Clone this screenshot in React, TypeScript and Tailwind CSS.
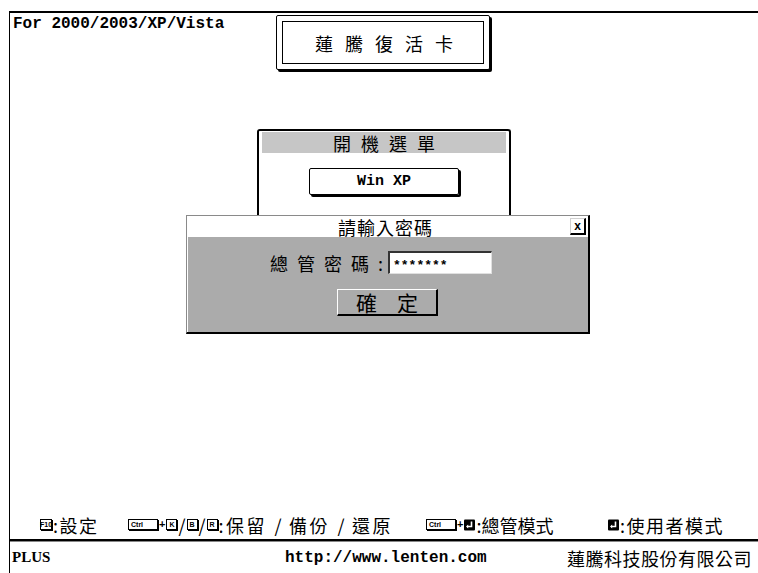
import React from "react";

function Key({ className, children }: { className: string; children?: React.ReactNode }) {
  return (
    <span
      className={
        "inline-flex items-center h-[11px] border border-black shadow-[1px_1px_0_#000] bg-white font-['Liberation_Sans',sans-serif] text-[7px] font-bold leading-none tracking-normal " +
        className
      }
    >
      {children}
    </span>
  );
}

function EnterIcon() {
  return (
    <svg width="11" height="12" viewBox="0 0 11 12" className="shrink-0">
      <rect x="0" y="0.5" width="11" height="11" rx="1" fill="#000" />
      <path d="M7.5 2.5 V7.5 H3" stroke="#fff" strokeWidth="1.6" fill="none" />
      <path d="M2 7.5 L4.2 5.6 V9.4 Z" fill="#fff" />
    </svg>
  );
}

export default function App() {
  return (
    <div className="w-[758px] h-[573px] overflow-hidden bg-white text-black font-['Noto_Sans_CJK_TC',sans-serif] pt-[11px] pl-[9px]">
      <div className="w-[760px] h-[562px] border-l border-t-2 border-black flex flex-col">
        {/* header */}
        <div className="flex h-[59px] shrink-0">
          <div className="w-[266px] pl-[3px] pt-[2px] font-['Liberation_Mono',monospace] font-bold text-[16px] leading-[18px]">
            For 2000/2003/XP/Vista
          </div>
          <div className="mt-[2px] w-[214px] h-[55px] border border-black shadow-[2px_2px_0_#000] p-[5px] rounded-[2px] bg-white">
            <div className="h-full border border-black flex items-center justify-center text-[18px] leading-none tracking-[12px] pl-[14px]">
              蓮騰復活卡
            </div>
          </div>
        </div>

        {/* boot menu */}
        <div className="ml-[247px] mt-[57px] w-[254px] h-[86px] shrink-0 border-2 border-b-0 border-black rounded-t-[3px] px-[3px] pt-[1px] flex flex-col items-center">
          <div className="w-full h-[21px] bg-[#c6c6c6] flex items-center justify-center text-[18px] leading-none tracking-[10px] pl-[10px]">
            開機選單
          </div>
          <div className="mt-[15px] w-[150px] h-[27px] border border-black shadow-[2px_2px_0_#000] rounded-[2px] flex items-center justify-center font-['Liberation_Mono',monospace] font-bold text-[15px] leading-none">
            Win XP
          </div>
        </div>

        {/* password dialog */}
        <div className="ml-[176px] w-[404px] h-[119px] shrink-0 border-t border-l border-[#8a8a8a] border-r-2 border-b-2 border-r-black border-b-black bg-[#ababab] shadow-[inset_1px_1px_0_#fff] flex flex-col">
          <div className="h-[21px] bg-white flex items-center">
            <div className="flex-1 text-center text-[18px] leading-none tracking-[1px] pl-[14px]">請輸入密碼</div>
            <div className="mr-[2px] w-[16px] h-[17px] border-t border-l border-[#d0d0d0] border-r-2 border-b-2 border-r-black border-b-black bg-white flex items-center justify-center font-['Liberation_Sans',sans-serif] font-bold text-[12px] leading-none">
              x
            </div>
          </div>
          <div className="flex items-center mt-[14px] pl-[83px]">
            <span className="text-[18px] leading-none tracking-[9px]">總管密碼</span>
            <span className="text-[18px] leading-none">:</span>
            <div className="ml-[5px] w-[104px] h-[23px] bg-white border-t-2 border-l-2 border-t-[#333] border-l-[#333] border-b border-r border-b-[#e0e0e0] border-r-[#e0e0e0] flex items-center pl-[3px] pt-[5px] font-['Liberation_Mono',monospace] font-bold text-[13px] leading-none">
              *******
            </div>
          </div>
          <div className="ml-[150px] mt-[15px] w-[101px] h-[27px] border-t border-l border-t-white border-l-white border-r-2 border-b-2 border-r-black border-b-black flex items-center justify-center gap-[20px] text-[21px] leading-none">
            <span>確</span>
            <span>定</span>
          </div>
        </div>

        <div className="flex-1" />

        {/* help row */}
        <div className="h-[26px] pb-[3px] shrink-0 flex items-center text-[18px] leading-none">
          <div className="w-[118px] pl-[30px] flex items-center tracking-[1.5px]">
            <Key className="w-[12px] justify-center">F10</Key>
            <span className="ml-[1px]">:設定</span>
          </div>
          <div className="w-[298px] flex items-center tracking-[2.5px]">
            <Key className="w-[30px] pl-[2px]">Ctrl</Key>
            <span className="font-['Liberation_Sans',sans-serif] font-bold text-[11px] mx-[1px] tracking-normal">+</span>
            <Key className="w-[11px] justify-center">K</Key>
            <span className="mx-[1px] tracking-normal">/</span>
            <Key className="w-[11px] justify-center">B</Key>
            <span className="mx-[1px] tracking-normal">/</span>
            <Key className="w-[11px] justify-center">R</Key>
            <span className="ml-[1px]">:保留</span>
            <span className="w-[22px] text-center tracking-normal">/</span>
            <span>備份</span>
            <span className="w-[22px] text-center tracking-normal">/</span>
            <span>還原</span>
          </div>
          <div className="w-[182px] flex items-center">
            <Key className="w-[30px] pl-[2px]">Ctrl</Key>
            <span className="font-['Liberation_Sans',sans-serif] font-bold text-[11px] mx-[1px]">+</span>
            <EnterIcon />
            <span className="ml-[1px]">:總管模式</span>
          </div>
          <div className="flex items-center tracking-[1.5px]">
            <EnterIcon />
            <span className="ml-[1px]">:使用者模式</span>
          </div>
        </div>

        {/* divider */}
        <div className="h-[2px] bg-black shrink-0" />
        <div className="h-[1px] bg-[#888] shrink-0" />

        {/* status row */}
        <div className="h-[31px] shrink-0 flex items-center">
          <span className="w-[275px] pl-[2px] font-['Liberation_Serif',serif] font-bold text-[15px] leading-none">PLUS</span>
          <span className="w-[282px] font-['Liberation_Mono',monospace] font-bold text-[16px] leading-none">http://www.lenten.com</span>
          <span className="text-[18px] leading-none tracking-[0.5px]">蓮騰科技股份有限公司</span>
        </div>
      </div>
    </div>
  );
}
